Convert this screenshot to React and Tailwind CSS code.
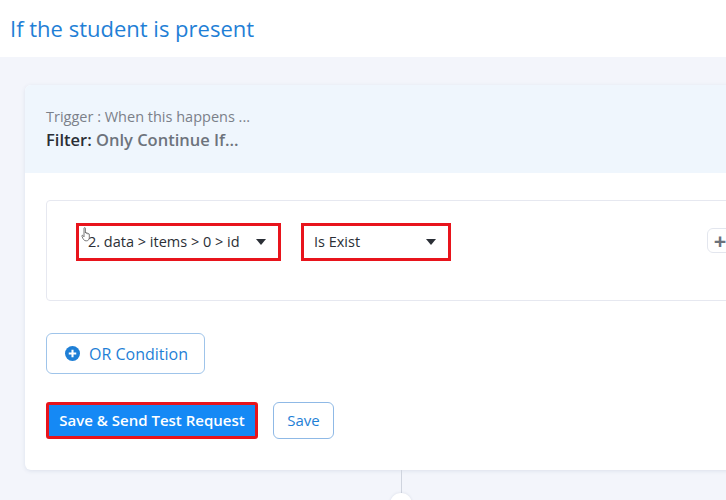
function Caret() {
  return (
    <svg width="10" height="6" viewBox="0 0 10 6" className="shrink-0">
      <path d="M0 0h10L5 6z" fill="#2b2f36" />
    </svg>
  );
}

function HandCursor() {
  return (
    <svg
      width="12"
      height="15"
      viewBox="0 0 12 15"
      className="absolute left-[2px] top-[1px]"
    >
      <path
        d="M3 1.2c0-.7 1.4-.7 1.4 0V6c0-.6 1.3-.6 1.3 0v.6c0-.6 1.3-.6 1.3 0v.6c0-.6 1.3-.6 1.3 0v3.4c0 1.8-1 3.2-2.8 3.2H5C3.6 13.8 2.8 13 2 11.6L.9 9.2c-.3-.7.6-1.2 1.1-.6L3 9.8z"
        fill="#fff"
        stroke="#555"
        strokeWidth="0.8"
      />
    </svg>
  );
}

export default function App() {
  return (
    <div className="w-[726px] h-[500px] overflow-hidden bg-[#f3f5fb] font-['Open_Sans',sans-serif]">
      {/* page title */}
      <div className="h-[57px] bg-white flex items-center px-[10px]">
        <h1 className="text-[22px] text-[#1f7fd6]">If the student is present</h1>
      </div>

      <div className="pl-[25px] pt-[28px]">
        <div className="w-[720px] h-[385px] rounded-l-md bg-white shadow-[0_1px_4px_rgba(60,80,120,0.12)] overflow-hidden">
          {/* card header */}
          <div className="h-[88px] bg-[#eff6fd] px-[21px] pt-[22px]">
            <p className="text-[14.5px] text-[#7b8089] leading-[20px]">Trigger : When this happens ...</p>
            <p className="text-[16.5px] leading-[22px] mt-[2px]">
              <span className="font-semibold text-[#2a2e35]">Filter:</span>{" "}
              <span className="font-semibold text-[#6d737c]">Only Continue If...</span>
            </p>
          </div>

          {/* card body */}
          <div className="px-[21px] pt-[27px]">
            <div className="h-[101px] w-[700px] border border-[#e6e8f0] rounded-sm pl-[29px] pt-[22px] flex items-start">
              <div className="relative w-[205px] h-[38px] border-[3px] border-[#e8141c] flex items-center justify-between pl-[9px] pr-[12px] text-[14.5px] text-[#2b2f36]">
                <HandCursor />
                <span>2. data &gt; items &gt; 0 &gt; id</span>
                <Caret />
              </div>
              <div className="ml-[20px] w-[150px] h-[38px] border-[3px] border-[#e8141c] flex items-center justify-between pl-[10px] pr-[12px] text-[14.5px] text-[#2b2f36]">
                <span>Is Exist</span>
                <Caret />
              </div>
              <div className="ml-[256px] mt-[5px] w-[26px] h-[25px] rounded-md border border-[#e3e6ee] bg-white flex items-center justify-center">
                <span className="text-[22px] leading-none font-bold text-[#6b717b] -mt-[2px]">+</span>
              </div>
            </div>

            <button className="mt-[32px] w-[159px] h-[41px] rounded-md border border-[#9fc4ea] bg-white flex items-center pl-[18px] gap-[9px] text-[16px] text-[#1f7fd6]">
              <svg width="15" height="15" viewBox="0 0 16 16">
                <circle cx="8" cy="8" r="8" fill="#1f7fd6" />
                <path d="M8 4v8M4 8h8" stroke="#fff" strokeWidth="2.2" />
              </svg>
              OR Condition
            </button>

            <div className="mt-[28px] flex items-start gap-[15px]">
              <button className="w-[212px] h-[37px] bg-[#1589f5] border-[3px] border-[#e8141c] rounded-[3px] text-white text-[15px] font-semibold">
                Save &amp; Send Test Request
              </button>
              <button className="w-[61px] h-[37px] rounded-md border border-[#8fb9e6] bg-white text-[15px] text-[#1f7fd6]">
                Save
              </button>
            </div>
          </div>
        </div>

        {/* connector to next step */}
        <div className="w-[22px] ml-[365px] flex flex-col items-center">
          <div className="w-px h-[23px] bg-[#cfd4de]" />
          <div className="w-[22px] h-[22px] rounded-full bg-white shadow-[0_0_3px_rgba(60,80,120,0.15)]" />
        </div>
      </div>
    </div>
  );
}
